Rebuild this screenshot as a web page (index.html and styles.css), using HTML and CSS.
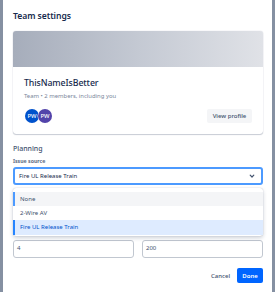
FILE: index.html
```html
<!DOCTYPE html>
<html>
<head>
<meta charset="utf-8">
<link rel="stylesheet" href="styles.css">
</head>
<body>
<div class="modal">
  <h1 class="title">Team settings</h1>
  <div class="card">
    <div class="card-banner"></div>
    <div class="card-body">
      <div class="team-name">ThisNameIsBetter</div>
      <div class="team-meta">Team • 2 members, including you</div>
      <div class="card-row">
        <div class="avatars">
          <span class="avatar a1">PW</span>
          <span class="avatar a2">PW</span>
        </div>
        <button class="btn-subtle">View profile</button>
      </div>
    </div>
  </div>
  <div class="section-title">Planning</div>
  <div class="field-label">Issue source</div>
  <div class="select-wrap">
    <div class="select">
      <span>Fire UL Release Train</span>
      <svg class="chev" width="8" height="8" viewBox="0 0 8 8"><path d="M2.2 3.2l1.8 1.8 1.8-1.8" fill="none" stroke="#42526e" stroke-width="1.2" stroke-linecap="round" stroke-linejoin="round"/></svg>
    </div>
    <div class="menu">
      <div class="menu-item hover">None</div>
      <div class="menu-item">2-Wire AV</div>
      <div class="menu-item selected">Fire UL Release Train</div>
    </div>
  </div>
  <div class="inputs">
    <div class="input">4</div>
    <div class="input">200</div>
  </div>
  <div class="footer">
    <button class="btn-link">Cancel</button>
    <button class="btn-primary">Done</button>
  </div>
</div>
</body>
</html>
```
FILE: styles.css
```css
* { box-sizing: border-box; }
html, body { margin: 0; padding: 0; }
body {
  background: #8590a2;
  font-family: "Noto Sans", "Liberation Sans", sans-serif;
  color: #172b4d;
  width: 275px;
  height: 292px;
  overflow: hidden;
}
.modal {
  margin: 0 3px;
  width: 269px;
  height: 292px;
  background: #fff;
  padding: 9px 9px 0 10px;
}
.title {
  margin: 0;
  font-size: 8.6px;
  line-height: 14px;
  font-weight: 600;
  letter-spacing: -0.05px;
}
.card {
  margin-top: 8px;
  border-radius: 3px;
  box-shadow: 0 1px 1px rgba(9,30,66,0.2), 0 0 1px rgba(9,30,66,0.3);
  overflow: hidden;
}
.card-banner {
  height: 36px;
  background: linear-gradient(90deg, #a6adbb 0%, #c4c9d3 50%, #e0e2e7 100%);
}
.card-body {
  padding: 9px 11px 11px 11px;
}
.team-name {
  font-size: 8.8px;
  line-height: 14px;
  font-weight: 500;
  letter-spacing: -0.1px;
}
.team-meta {
  margin-top: 1px;
  font-size: 5.9px;
  line-height: 10px;
  color: #7a869a;
}
.card-row {
  margin-top: 8px;
  display: flex;
  align-items: center;
  justify-content: space-between;
}
.avatars {
  display: flex;
  padding-left: 1px;
}
.avatar {
  width: 14px;
  height: 14px;
  border-radius: 50%;
  color: #fff;
  font-size: 5.8px;
  line-height: 14px;
  text-align: center;
  font-weight: 500;
}
.avatar.a1 { background: #0052cc; }
.avatar.a2 { background: #5243aa; margin-left: -1px; box-shadow: 0 0 0 0.5px #fff; }
.btn-subtle {
  border: 0;
  background: #f4f5f7;
  border-radius: 2px;
  font-family: inherit;
  font-size: 6px;
  font-weight: 500;
  color: #42526e;
  height: 14px;
  width: 45px;
  padding: 0;
}
.section-title {
  margin-top: 9px;
  font-size: 7px;
  line-height: 12px;
  font-weight: 500;
  color: #42526e;
}
.field-label {
  margin-top: 2px;
  font-size: 5.2px;
  line-height: 8px;
  font-weight: 700;
  color: #5e6c84;
}
.select-wrap {
  position: relative;
  margin-top: 2px;
}
.select {
  height: 18px;
  border: 2px solid #4c9aff;
  border-radius: 3px;
  display: flex;
  align-items: center;
  justify-content: space-between;
  padding: 0 5px 0 4px;
  font-size: 6px;
}
.chev { display: block; }
.menu {
  position: absolute;
  left: 0;
  right: 0;
  top: 21px;
  background: #fff;
  border-radius: 3px;
  box-shadow: 0 2px 4px rgba(9,30,66,0.2), 0 0 1px rgba(9,30,66,0.3);
  padding: 4px 0 1px;
  z-index: 2;
}
.menu-item {
  height: 14px;
  line-height: 14px;
  font-size: 6px;
  padding-left: 5px;
  border-left: 2px solid transparent;
  color: #42526e;
}
.menu-item.hover { background: #f4f5f7; border-left-color: #4c9aff; }
.menu-item.selected { background: #deebff; border-left-color: #2684ff; color: #0052cc; height: 15px; line-height: 15px; }
.inputs {
  margin-top: 55px;
  display: flex;
  gap: 8px;
}
.input {
  flex: 1;
  height: 18px;
  border: 1.5px solid #c1c7d0;
  border-radius: 3px;
  font-size: 6px;
  line-height: 15px;
  padding-left: 3px;
  color: #42526e;
}
.footer {
  margin-top: 10px;
  display: flex;
  justify-content: flex-end;
  align-items: center;
  gap: 7px;
}
.btn-link {
  border: 0;
  background: none;
  font-family: inherit;
  font-size: 6px;
  font-weight: 500;
  color: #42526e;
  padding: 0;
}
.btn-primary {
  border: 0;
  background: #0065ff;
  color: #fff;
  border-radius: 2px;
  font-family: inherit;
  font-size: 6px;
  font-weight: 600;
  height: 15px;
  width: 26px;
  padding: 0;
}
```
